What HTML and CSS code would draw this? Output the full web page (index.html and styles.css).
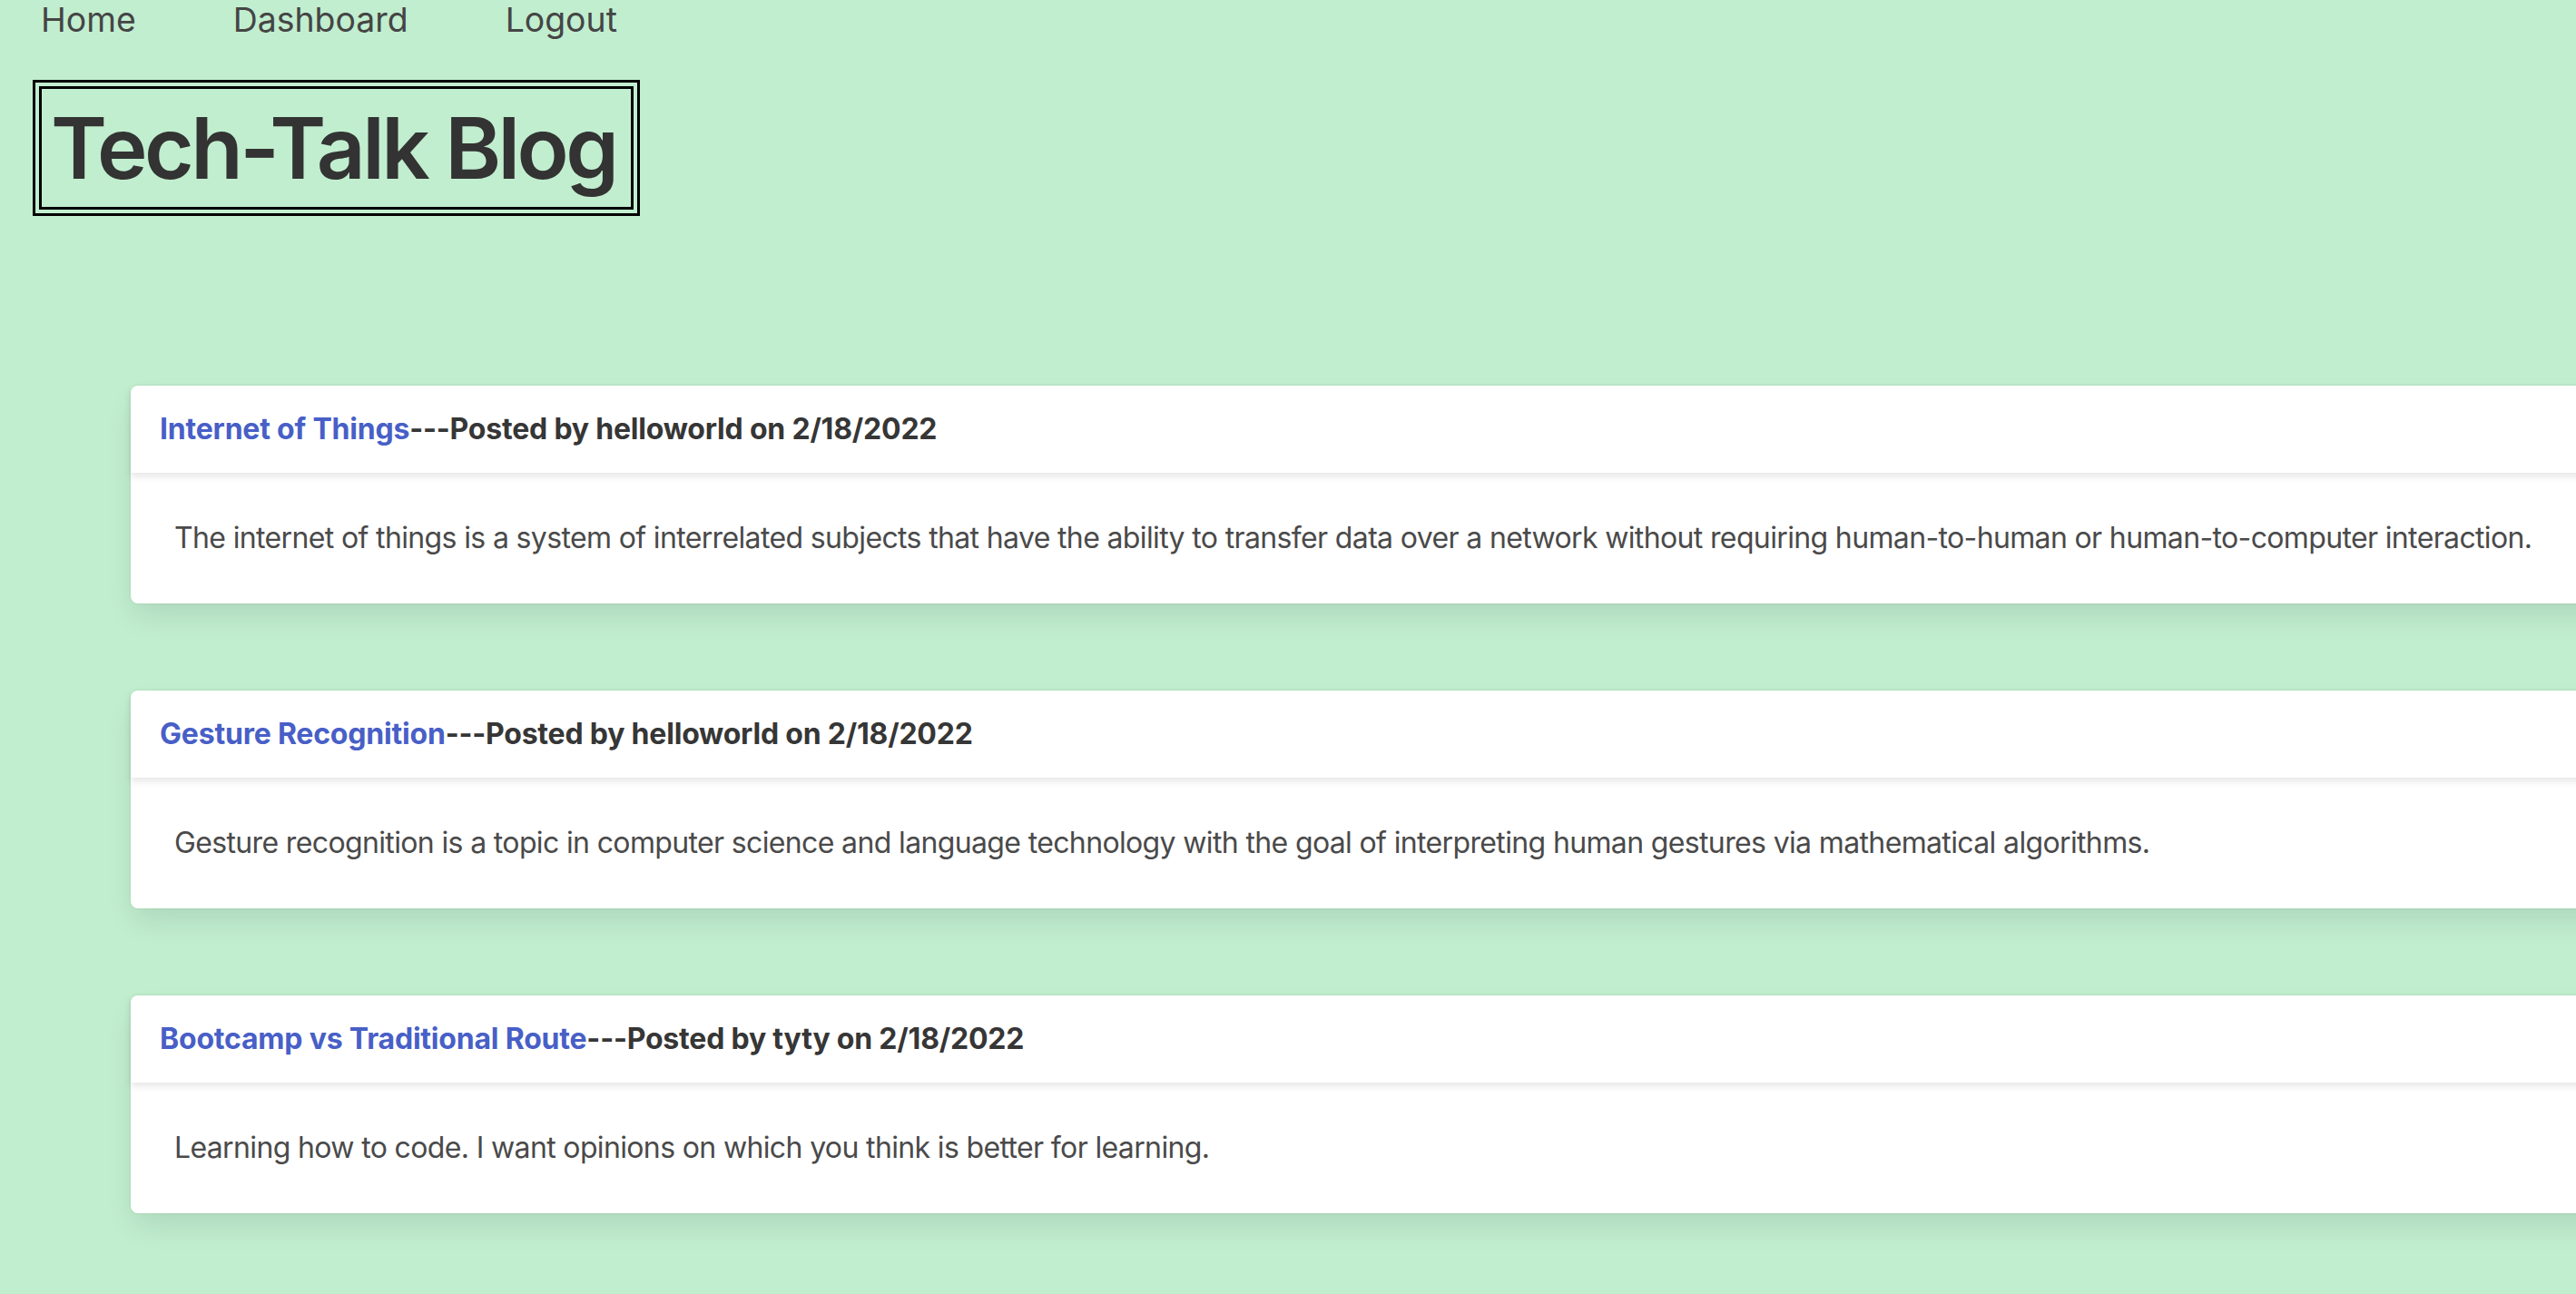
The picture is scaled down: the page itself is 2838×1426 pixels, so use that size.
FILE: index.html
```html
<!DOCTYPE html>
<html lang="en">
<head>
<meta charset="utf-8">
<title>Tech-Talk Blog</title>
<link rel="stylesheet" href="styles.css">
</head>
<body>
<nav class="topnav">
  <a class="nav-link" href="#">Home</a>
  <a class="nav-link" href="#">Dashboard</a>
  <a class="nav-link" href="#">Logout</a>
</nav>
<header class="site-header">
  <h1 class="site-title">Tech-Talk Blog</h1>
</header>
<main class="posts">
  <article class="card">
    <header class="card-header">
      <p class="card-header-title"><a class="post-link" href="#">Internet of Things</a>---Posted by helloworld on 2/18/2022</p>
    </header>
    <div class="card-content">
      <p>The internet of things is a system of interrelated subjects that have the ability to transfer data over a network without requiring human-to-human or human-to-computer interaction.</p>
    </div>
  </article>
  <article class="card">
    <header class="card-header">
      <p class="card-header-title"><a class="post-link" href="#">Gesture Recognition</a>---Posted by helloworld on 2/18/2022</p>
    </header>
    <div class="card-content">
      <p>Gesture recognition is a topic in computer science and language technology with the goal of interpreting human gestures via mathematical algorithms.</p>
    </div>
  </article>
  <article class="card">
    <header class="card-header">
      <p class="card-header-title"><a class="post-link" href="#">Bootcamp vs Traditional Route</a>---Posted by tyty on 2/18/2022</p>
    </header>
    <div class="card-content">
      <p>Learning how to code. I want opinions on which you think is better for learning.</p>
    </div>
  </article>
</main>
</body>
</html>
```
FILE: styles.css
```css
html, body {
  margin: 0;
  padding: 0;
  overflow-x: hidden;
}
body {
  background: #c1eecf;
  font-family: Inter, "Noto Sans", "Liberation Sans", sans-serif;
  color: #4a4a4a;
}
p { margin: 0; }

.topnav {
  display: flex;
  gap: 107px;
  padding-left: 45px;
  height: 44px;
  align-items: center;
}
.nav-link {
  font-size: 37.4px;
  line-height: 44px;
  color: #454545;
  text-decoration: none;
}

.site-header {
  padding: 44px 0 0 36px;
}
.site-title {
  display: inline-block;
  margin: 0;
  border: 10px double #000;
  padding: 10px 17px 10px 10px;
  font-size: 94px;
  line-height: 110px;
  font-weight: 600;
  letter-spacing: -3.6px;
  color: #333;
}

.posts {
  padding: 187px 0 40px 144px;
}
.card {
  width: 3000px;
  background: #fff;
  border-radius: 8px;
  box-shadow: 0 16px 32px -4px rgba(10, 10, 10, 0.1), 0 0 0 2px rgba(10, 10, 10, 0.02);
  margin-bottom: 96px;
  color: #4a4a4a;
}
.card-header {
  box-shadow: 0 4px 8px rgba(10, 10, 10, 0.1);
  padding: 24px 32px;
}
.card-header-title {
  font-size: 32px;
  line-height: 48px;
  font-weight: 700;
  letter-spacing: -0.2px;
  color: #363636;
}
.post-link {
  color: #485fc7;
  text-decoration: none;
}
.card-content {
  padding: 48px;
  font-size: 32px;
  line-height: 48px;
  letter-spacing: -0.64px;
}
```
